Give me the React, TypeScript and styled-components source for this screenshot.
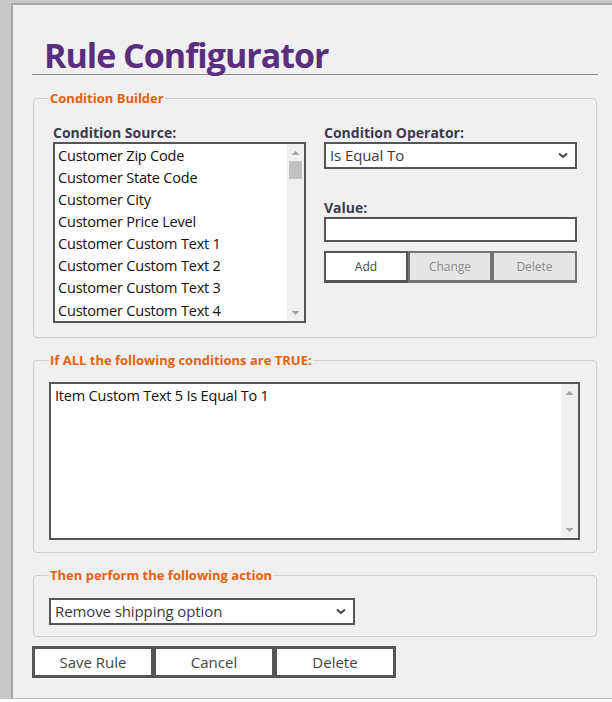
import React from 'react'
import styled, { createGlobalStyle } from 'styled-components'

const GlobalStyle = createGlobalStyle`
  html, body {
    margin: 0;
    padding: 0;
    background: #ffffff;
    overflow: hidden;
  }
  body {
    font-family: "Open Sans", "Noto Sans", sans-serif;
  }
`

const sources = [
  'Customer Zip Code',
  'Customer State Code',
  'Customer City',
  'Customer Price Level',
  'Customer Custom Text 1',
  'Customer Custom Text 2',
  'Customer Custom Text 3',
  'Customer Custom Text 4',
]

export default function App() {
  return <Page>
    <GlobalStyle />
    <Panel>
      <Title>Rule Configurator</Title>

      <Group>
        <Legend>Condition Builder</Legend>
        <BuilderGrid>
          <Column>
            <Label>Condition Source:</Label>
            <ListBox>
              <Items>
                {sources.map(s => <Item key={s}>{s}</Item>)}
              </Items>
              <ScrollBar thumb />
            </ListBox>
          </Column>
          <Column>
            <Label>Condition Operator:</Label>
            <Select width={253}>
              <span>Is Equal To</span>
              <Chevron />
            </Select>
            <Label spaced>Value:</Label>
            <TextInput />
            <SmallButtons>
              <SmallButton>Add</SmallButton>
              <SmallButton disabled>Change</SmallButton>
              <SmallButton disabled>Delete</SmallButton>
            </SmallButtons>
          </Column>
        </BuilderGrid>
      </Group>

      <Group>
        <Legend>If ALL the following conditions are TRUE:</Legend>
        <Conditions>
          <ConditionText>Item Custom Text 5 Is Equal To 1</ConditionText>
          <ScrollBar />
        </Conditions>
      </Group>

      <Group>
        <Legend>Then perform the following action</Legend>
        <Select width={306} tall={27}>
          <span>Remove shipping option</span>
          <Chevron />
        </Select>
      </Group>

      <Actions>
        <ActionButton>Save Rule</ActionButton>
        <ActionButton>Cancel</ActionButton>
        <ActionButton>Delete</ActionButton>
      </Actions>
    </Panel>
  </Page>
}

function Chevron() {
  return <svg width="10" height="7" viewBox="0 0 10 7">
    <polyline points="1,1.5 5,5 9,1.5" fill="none" stroke="#444" strokeWidth="2" />
  </svg>
}

function ScrollBar({ thumb }: { thumb?: boolean }) {
  return <Track>
    <svg width="9" height="6" viewBox="0 0 9 6"><polygon points="4.5,1 8.5,5 0.5,5" fill="#a3a3a3" /></svg>
    {thumb && <Thumb />}
    <TrackFill />
    <svg width="9" height="6" viewBox="0 0 9 6"><polygon points="0.5,1 8.5,1 4.5,5" fill="#a3a3a3" /></svg>
  </Track>
}

const Page = styled.div`
  background: #c8c8c8;
  height: 699px;
  padding: 3px 0 0 11px;
  box-sizing: border-box;
`
const Panel = styled.div`
  width: 601px;
  height: 696px;
  box-sizing: border-box;
  background: #f0f0f0;
  border-top: 2px solid #a6a6a6;
  border-left: 2px solid #a6a6a6;
  border-bottom: 1px solid #bdbdbd;
  padding: 31px 0 0 19px;
  display: flex;
  flex-direction: column;
`
const Title = styled.h1`
  width: 554px;
  margin: 0;
  padding-left: 12px;
  font-size: 34px;
  line-height: 38px;
  font-weight: 700;
  color: #5b2d7f;
  border-bottom: 1px solid #8a8a8a;
  letter-spacing: -1px;
`
const Group = styled.fieldset`
  width: 564px;
  box-sizing: border-box;
  margin: 14.5px 0 0 1px;
  padding: 0 16px 12px 15px;
  border: 1px solid #cfcfcf;
  border-radius: 4px;
  &:first-of-type {
    padding: 17px 19px 14px 19px;
  }
  &:nth-of-type(2) {
    padding-top: 12.8px;
  }
  &:nth-of-type(3) {
    padding-top: 13.5px;
    padding-bottom: 11px;
  }
`
const Legend = styled.legend`
  padding: 0 1px;
  margin-left: 0;
  font-size: 13px;
  line-height: 17px;
  font-weight: 700;
  color: #e8610e;
  ${Group}:first-of-type & {
    margin-left: -4px;
  }
`
const BuilderGrid = styled.div`
  display: grid;
  grid-template-columns: 253px 253px;
  column-gap: 18px;
`
const Column = styled.div`
  display: flex;
  flex-direction: column;
`
const Label = styled.label<{ spaced?: boolean }>`
  font-size: 14px;
  line-height: 18px;
  font-weight: 700;
  color: #3b3b4e;
  margin-top: ${p => p.spaced ? '30.6px' : '0'};
`
const ListBox = styled.div`
  height: 181px;
  box-sizing: border-box;
  border: 2px solid #555;
  background: #fff;
  display: flex;
`
const Items = styled.ul`
  flex: 1;
  list-style: none;
  margin: 0;
  padding: 1px 0 0 3px;
  overflow: hidden;
`
const Item = styled.li`
  font-size: 14.5px;
  letter-spacing: -0.2px;
  line-height: 22.15px;
  color: #111;
  white-space: nowrap;
`
const Track = styled.div`
  width: 17px;
  background: #f0f0f0;
  display: flex;
  flex-direction: column;
  align-items: center;
  padding: 6px 0 5px;
  box-sizing: border-box;
`
const Thumb = styled.div`
  width: 13px;
  height: 18px;
  margin-top: 5px;
  background: #c1c1c1;
`
const TrackFill = styled.div`
  flex: 1;
`
const Select = styled.div<{ width: number; tall?: number }>`
  width: ${p => p.width}px;
  height: ${p => p.tall ?? 27}px;
  box-sizing: border-box;
  border: 2px solid #555;
  background: #fff;
  display: flex;
  align-items: center;
  justify-content: space-between;
  padding: 0 7px 0 4px;
  font-size: 15px;
  letter-spacing: -0.1px;
  color: #3a3a3a;
`
const TextInput = styled.div`
  height: 25px;
  box-sizing: border-box;
  border: 2px solid #555;
  background: #fff;
`
const SmallButtons = styled.div`
  display: grid;
  grid-template-columns: 84px 84px 85px;
  margin-top: 9px;
`
const SmallButton = styled.button`
  height: 32px;
  box-sizing: border-box;
  border: 2px solid ${p => p.disabled ? '#737373' : '#555'};
  border-width: 2px 2px 3px 2px;
  background: ${p => p.disabled ? '#e6e6e6' : '#fff'};
  color: ${p => p.disabled ? '#8a8a8a' : '#444'};
  font-family: "Open Sans", "Noto Sans", sans-serif;
  font-size: 12px;
  padding: 0;
  margin: 0;
`
const Conditions = styled.div`
  width: 531px;
  height: 158px;
  box-sizing: border-box;
  border: 2px solid #555;
  background: #fff;
  display: flex;
`
const ConditionText = styled.div`
  flex: 1;
  padding: 1px 0 0 4px;
  font-size: 14.5px;
  letter-spacing: -0.2px;
  line-height: 22px;
  color: #111;
`
const Actions = styled.div`
  display: flex;
  margin-top: 9px;
`
const ActionButton = styled.button`
  width: 122px;
  height: 32px;
  box-sizing: border-box;
  border: 3px solid #555;
  background: #fff;
  color: #444;
  font-family: "Open Sans", "Noto Sans", sans-serif;
  font-size: 15px;
  padding: 0;
  & + & {
    margin-left: -1px;
  }
`
